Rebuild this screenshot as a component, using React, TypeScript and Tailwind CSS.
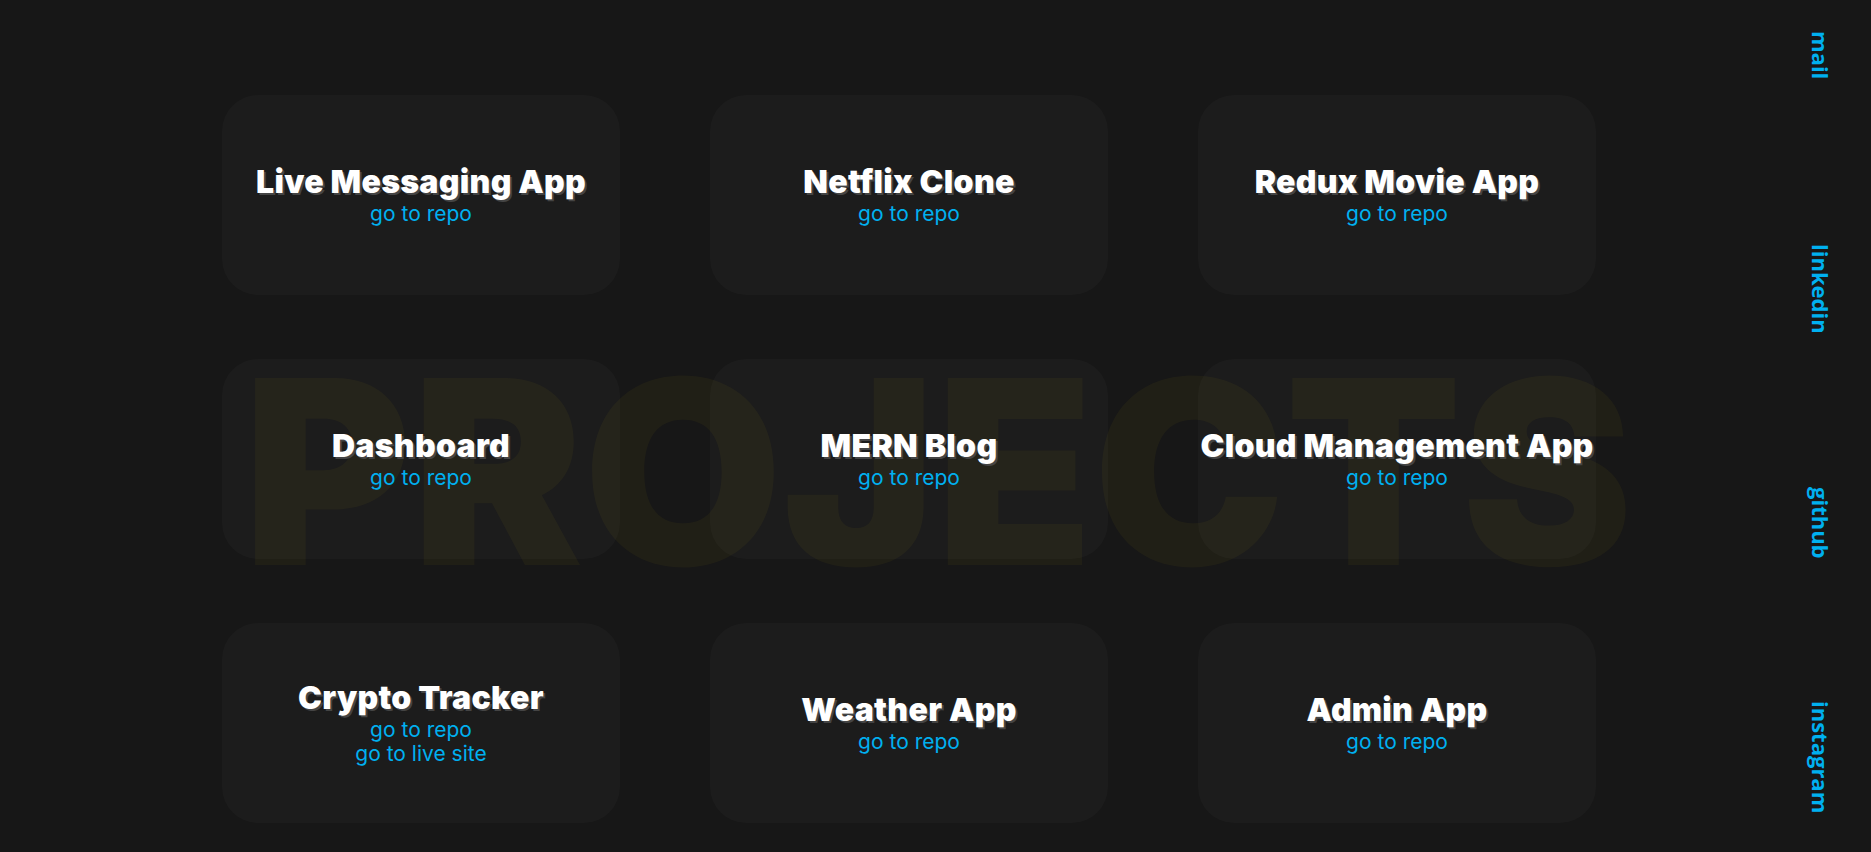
import React from "react";

type Project = {
  title: string;
  repo: string;
  live?: string;
};

const projects: Project[] = [
  { title: "Live Messaging App", repo: "#" },
  { title: "Netflix Clone", repo: "#" },
  { title: "Redux Movie App", repo: "#" },
  { title: "Dashboard", repo: "#" },
  { title: "MERN Blog", repo: "#" },
  { title: "Cloud Management App", repo: "#" },
  { title: "Crypto Tracker", repo: "#", live: "#" },
  { title: "Weather App", repo: "#" },
  { title: "Admin App", repo: "#" },
];

const socials = ["mail", "linkedin", "github", "instagram"];

function ProjectCard({ project }: { project: Project }) {
  return (
    <div className="relative z-10 h-[200px] rounded-[36px] bg-[#ffffff06] flex flex-col items-center justify-center text-center">
      <h3 className="text-[32px] leading-[34px] tracking-[0.3px] font-black text-white [text-shadow:2px_2px_0_#444]">
        {project.title}
      </h3>
      <a
        href={project.repo}
        className="mt-[3px] text-[21px] leading-[24px] text-[#00b0f0]"
      >
        go to repo
      </a>
      {project.live && (
        <a
          href={project.live}
          className="text-[21px] leading-[24px] text-[#00b0f0]"
        >
          go to live site
        </a>
      )}
    </div>
  );
}

export default function App() {
  return (
    <div className="relative min-h-screen h-[852px] overflow-hidden bg-[#171717] flex font-['Inter',sans-serif]">
      {/* Big background heading */}
      <div className="absolute left-[243px] top-[332px] z-0 select-none text-[257px] leading-[280px] font-black text-[#ffe6000a] pointer-events-none">
        PROJECTS
      </div>

      {/* Projects grid */}
      <main className="flex-1 pl-[222px] pt-[95px]">
        <div className="grid grid-cols-[repeat(3,398px)] gap-x-[90px] gap-y-[64px]">
          {projects.map((p) => (
            <ProjectCard key={p.title} project={p} />
          ))}
        </div>
      </main>

      {/* Social sidebar */}
      <nav className="w-[100px] flex flex-col items-center gap-[124px] font-['Open_Sans',sans-serif]">
        {socials.map((s) => (
          <div key={s} className="h-[110px] flex items-center justify-center">
            <a
              href="#"
              className="[writing-mode:vertical-rl] text-[22px] leading-[24px] font-bold text-[#00b0f0]"
            >
              {s}
            </a>
          </div>
        ))}
      </nav>
    </div>
  );
}
